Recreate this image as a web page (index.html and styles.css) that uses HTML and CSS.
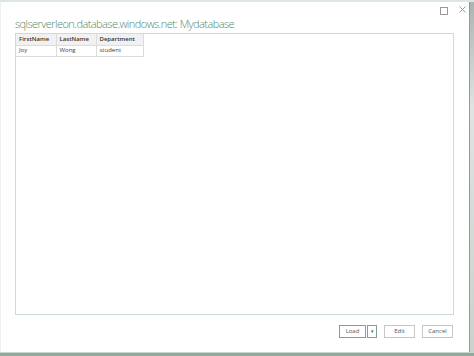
FILE: index.html
```html
<html>
<head>
    <title>Navigator</title>
    <link rel="stylesheet" href="styles.css">
</head>
<body>
    <div class="desk">
        <div class="dialog">
            <div class="title-bar">
                <h1 class="title">sqlserverleon.database.windows.net: Mydatabase</h1>
                <div class="win-controls">
                    <span class="win-btn max"></span>
                    <svg class="win-btn close" width="7" height="7" viewBox="0 0 7 7">
                        <path d="M0.5 0.5 L6.5 6.5 M6.5 0.5 L0.5 6.5" stroke="#9a9a9a" stroke-width="1" fill="none"/>
                    </svg>
                </div>
            </div>
            <div class="preview">
                <table class="grid">
                    <tr>
                        <th class="c1">FirstName</th>
                        <th class="c2">LastName</th>
                        <th class="c3">Department</th>
                    </tr>
                    <tr>
                        <td>Joy</td>
                        <td>Wong</td>
                        <td>student</td>
                    </tr>
                </table>
            </div>
            <div class="actions">
                <div class="split">
                    <button class="btn load">Load</button>
                    <button class="btn drop">&#9662;</button>
                </div>
                <button class="btn">Edit</button>
                <button class="btn">Cancel</button>
            </div>
        </div>
        <div class="behind"></div>
    </div>
    <div class="taskbar"></div>
</body>
</html>
```

FILE: styles.css
```css
body, div, h1, table, th, td, button {
    margin: 0;
    padding: 0;
    box-sizing: border-box;
}

body {
    width: 474px;
    height: 356px;
    overflow: hidden;
    background: #ffffff;
    font-family: 'Open Sans', sans-serif;
    display: flex;
    flex-direction: column;
}

.desk {
    display: flex;
    height: 352px;
    border-top: 2px solid #dde6e1;
}

.dialog {
    width: 470px;
    flex-shrink: 0;
    display: flex;
    flex-direction: column;
    background: #ffffff;
    border-left: 1px solid #edf2ef;
    border-right: 1px solid #8f9b95;
    padding: 0 14px 0 14px;
}

.behind {
    flex: 1;
    background: linear-gradient(#aab5b0, #dfe4e1 30%, #c9d2cd);
}

.title-bar {
    display: flex;
    justify-content: space-between;
    height: 31px;
}

.title {
    font-family: 'Open Sans', sans-serif;
    font-weight: 300;
    font-size: 11px;
    letter-spacing: -0.55px;
    color: #53886c;
    padding-top: 14px;
    line-height: 15px;
}

.win-controls {
    display: flex;
    gap: 11px;
    padding-top: 4px;
    margin-right: -11px;
}

.win-btn.max {
    width: 6px;
    height: 6px;
    border: 1px solid #9a9a9a;
    margin-top: 1px;
}

.preview {
    height: 282px;
    border: 1px solid #cbdcd3;
    margin-right: 1px;
}

.grid {
    border-collapse: collapse;
    font-family: 'Open Sans', sans-serif;
    font-size: 6px;
    color: #444;
}

.grid th, .grid td {
    border: 1px solid #dcdcdc;
    height: 11px;
    padding: 0 3px;
    text-align: left;
    line-height: 9px;
}

.grid th {
    background: #f1f1f1;
    font-weight: 600;
    color: #333;
}

.grid tr:first-child th {
    border-top: none;
}

.grid tr th:first-child, .grid tr td:first-child {
    border-left: none;
}

.grid .c1 { width: 40px; }
.grid .c2 { width: 40px; }
.grid .c3 { width: 47px; }

.actions {
    display: flex;
    justify-content: flex-end;
    gap: 7px;
    padding-top: 10px;
    margin-right: 2px;
}

.split {
    display: flex;
    gap: 1px;
}

.btn {
    height: 13px;
    width: 31px;
    border: 1px solid #c6c6c6;
    background: #ffffff;
    font-family: 'Open Sans', sans-serif;
    font-size: 6px;
    color: #555;
    line-height: 11px;
}

.btn.load {
    width: 27px;
    border-color: #7fa390;
}

.btn.drop {
    width: 10px;
    border-color: #7fa390;
    font-size: 5px;
}

.taskbar {
    height: 4px;
    background: #8fab9c;
    border-top: 1px solid #c6d6cd;
}
```
